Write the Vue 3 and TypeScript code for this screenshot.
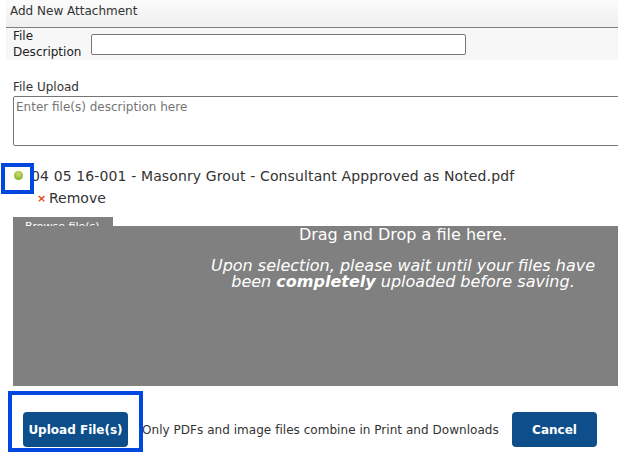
<script setup lang="ts">
const fileName: string = '04 05 16-001 - Masonry Grout - Consultant Appproved as Noted.pdf'
</script>

<template>
  <div class="page">
    <div class="title">Add New Attachment</div>
    <div class="desc-row">
      <label class="desc-label">File Description</label>
      <input class="desc-input" type="text" />
    </div>
    <div class="upload">
      <div class="upload-label">File Upload</div>
      <textarea class="upload-text" placeholder="Enter file(s) description here"></textarea>
    </div>
    <div class="file">
      <span class="dot"></span>
      <div class="file-info">
        <div class="file-name">{{ fileName }}</div>
        <div class="remove"><span class="x">×</span>Remove</div>
      </div>
    </div>
    <div class="browse"><span>Browse file(s)</span></div>
    <div class="drop">
      <p class="drop-main">Drag and Drop a file here.</p>
      <p class="drop-note">Upon selection, please wait until your files have<br />been <b>completely</b> uploaded before saving.</p>
    </div>
    <div class="actions">
      <button class="btn upload-btn" type="button">Upload File(s)</button>
      <span class="hint">Only PDFs and image files combine in Print and Downloads</span>
      <button class="btn cancel-btn" type="button">Cancel</button>
    </div>
    <div class="mark mark-dot"></div>
    <div class="mark mark-btn"></div>
  </div>
</template>

<style>
html, body { margin: 0; background: #fff; overflow: hidden; }
</style>

<style scoped>
.page {
  position: relative;
  width: 618px;
  height: 456px;
  overflow: hidden;
  font-family: "DejaVu Sans", Verdana, sans-serif;
  color: #333;
  background: #fff;
}
.title {
  box-sizing: border-box;
  height: 28px;
  margin-left: 6px;
  padding: 4px 0 0 4px;
  font-size: 12px;
  line-height: 15px;
  color: #333;
  border-bottom: 1px solid #808080;
  background: linear-gradient(#fbfbfb, #efefef);
}
.desc-row {
  box-sizing: border-box;
  display: flex;
  align-items: center;
  height: 32px;
  margin-left: 6px;
  padding-left: 7px;
  background: #f7f7f7;
}
.desc-label {
  width: 78px;
  font-size: 12px;
  line-height: 16px;
  color: #222;
}
.desc-input {
  box-sizing: border-box;
  width: 375px;
  height: 21px;
  margin: 0;
  padding: 0;
  border: 1px solid #767676;
  border-radius: 2px;
  background: #fff;
}
.upload {
  margin: 20px 0 0 13px;
}
.upload-label {
  font-size: 12px;
  line-height: 15px;
  color: #333;
}
.upload-text {
  display: block;
  box-sizing: border-box;
  width: 640px;
  height: 50px;
  margin: 1px 0 0;
  padding: 3px 2px;
  border: 1px solid #767676;
  border-radius: 2px;
  font-family: inherit;
  font-size: 12px;
  line-height: 15px;
  resize: none;
}
.upload-text::placeholder { color: #757575; opacity: 1; }
.file {
  display: flex;
  align-items: flex-start;
  height: 71px;
  padding-left: 14px;
}
.dot {
  flex: none;
  width: 9px;
  height: 9px;
  margin-top: 25px;
  border-radius: 50%;
  background: radial-gradient(circle at 50% 35%, #cfe07a, #8fb32e 70%, #7d9d2a);
}
.file-info {
  margin-left: 8px;
  padding-top: 22px;
}
.file-name {
  font-size: 14px;
  line-height: 17px;
  color: #333;
  white-space: nowrap;
  letter-spacing: 0.125px;
}
.remove {
  display: flex;
  align-items: center;
  margin-top: 5px;
  font-size: 14px;
  line-height: 17px;
}
.x {
  width: 12px;
  margin-left: 6px;
  color: #e8450c;
  font-weight: 700;
  font-size: 11px;
  line-height: 13px;
}
.browse {
  box-sizing: border-box;
  width: 100px;
  height: 9px;
  margin-left: 13px;
  overflow: hidden;
  background: #808080;
  color: #fff;
  font-size: 11px;
  line-height: 13px;
  padding: 3px 0 0 12px;
}
.browse span { display: block; white-space: nowrap; }
.drop {
  box-sizing: border-box;
  width: 605px;
  height: 160px;
  margin-left: 13px;
  padding-left: 175px;
  background: #808080;
  color: #fff;
  text-align: center;
}
.drop-main {
  margin: 0;
  font-size: 16px;
  line-height: 17px;
}
.drop-note {
  margin: 15px 0 0;
  font-size: 16px;
  line-height: 16px;
  font-style: italic;
  white-space: nowrap;
}
.actions {
  display: flex;
  align-items: center;
  height: 35px;
  margin-top: 26px;
  padding-left: 23px;
}
.btn {
  box-sizing: border-box;
  height: 35px;
  margin: 0;
  padding: 0;
  border: 0;
  border-radius: 4px;
  background: #0e4f8b;
  color: #fff;
  font-family: inherit;
  font-size: 12px;
  font-weight: 700;
}
.upload-btn { width: 105px; }
.cancel-btn { width: 85px; margin-left: 14px; }
.hint {
  margin-left: 14px;
  width: 356px;
  white-space: nowrap;
  font-size: 12px;
  color: #333;
  letter-spacing: 0.04px;
}
.mark {
  position: absolute;
  box-sizing: border-box;
  border: 4px solid #0047e0;
  pointer-events: none;
}
.mark-dot { left: 1px; top: 163px; width: 33px; height: 31px; }
.mark-btn { left: 8px; top: 391px; width: 135px; height: 61px; }
</style>
